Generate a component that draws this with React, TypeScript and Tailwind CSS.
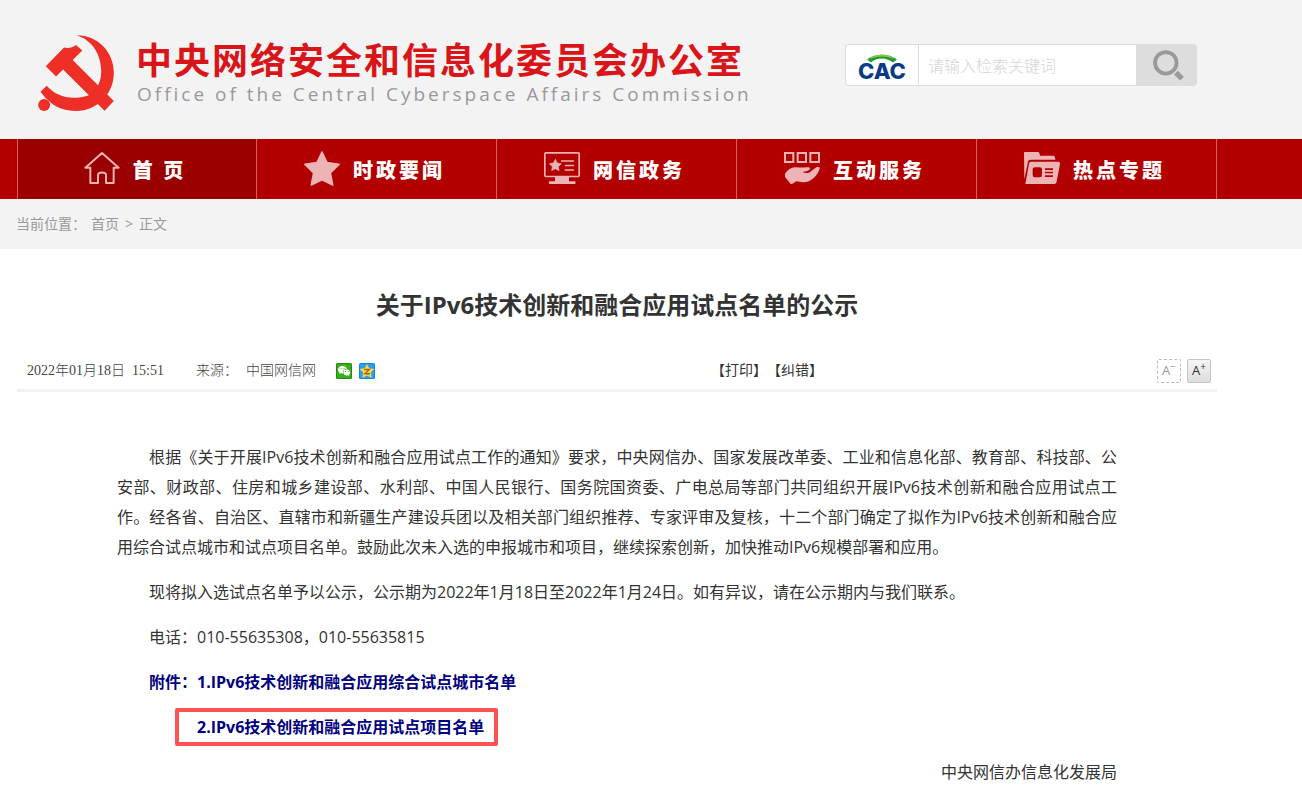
import type { ReactNode } from 'react';

function Emblem() {
  return (
    <svg viewBox="54 44 228 229" className="h-[76px] w-[76px] shrink-0" fill="#ee2f28" aria-hidden="true">
      <path d="M170 45C236 46 282 96 282 158C282 222 232 273 168 273C134 273 108 263 91 247L76 234L61 215L80 197C108 230 155 242 205 226L235 195C242 180 244 168 244 152C243 108 222 62 170 45Z" />
      <path d="M77 138L132 82C145 85 158 82 168 74L187 91L158 119L282 243L254 272L129 148L108 169Z" />
      <circle cx="72" cy="255" r="18" />
    </svg>
  );
}

function SearchLogo() {
  return (
    <svg viewBox="0 -9 54 40" className="h-10 w-[54px]" aria-label="CAC" role="img">
      <text x="27" y="25" textAnchor="middle" fill="#0a3b87" fontFamily="Inter" fontWeight="800" fontSize="22">CAC</text>
      <path d="M12 5.500C20 -1 34 -1 42 5.500L38 8.500C31 3 22 3 16 8.500Z" fill="#1f9a3c" />
      <path d="M14 4C22 -0.700 32 -0.700 40 4L38 4.500C31 1.800 22 1.800 16 4.500Z" fill="#8cc63f" />
    </svg>
  );
}

function SearchIcon() {
  return (
    <svg viewBox="968 62 92 92" className="h-[31px] w-[31px]" fill="none" stroke="#999999" aria-hidden="true">
      <circle cx="1006" cy="100" r="32" strokeWidth="11" />
      <path d="M1036 129L1054 147" strokeWidth="16" />
    </svg>
  );
}

function NavIcon({ children }: { children: ReactNode }) {
  return (
    <svg viewBox="0 0 108 108" className="h-9 w-9 shrink-0" fill="#eeb3b5" stroke="none" aria-hidden="true">
      {children}
    </svg>
  );
}

const homeIcon = (
  <NavIcon>
    <path d="M54 6L104 50H89V96H66V72C66 62 42 62 42 72V96H19V50H4Z" fill="none" stroke="#eeb3b5" strokeWidth="6" strokeLinejoin="round" />
  </NavIcon>
);

const starIcon = (
  <NavIcon>
    <path d="M54 3L69 35L105 40L79 66L86 102L54 86L22 102L29 66L3 40L39 35Z" stroke="#eeb3b5" strokeWidth="5" strokeLinejoin="round" />
  </NavIcon>
);

const monitorIcon = (
  <NavIcon>
    <rect x="2.5" y="5.5" width="103" height="71" rx="3" fill="none" stroke="#eeb3b5" strokeWidth="5" />
    <path d="M33 77H75V91H91A4 4 0 0 1 91 99H18A4 4 0 0 1 18 91H33Z" />
    <path d="M34 25L39.500 36L52 38L43 47L45 59L34 53L23 59L25 47L16 38L28.500 36Z" stroke="#eeb3b5" strokeWidth="2" strokeLinejoin="round" />
    <path d="M53 30H88M64 43.500H88M64 57H88" fill="none" stroke="#eeb3b5" strokeWidth="5" strokeLinecap="round" />
  </NavIcon>
);

const handIcon = (
  <NavIcon>
    <path d="M3 6H28V33H3ZM41 6H66V33H41ZM79 6H105V33H79Z" fill="none" stroke="#eeb3b5" strokeWidth="6" />
    <path d="M3 68C12 54 24 47 38 49C50 51 62 48 75 49C83 54 75 61 56 63C64 68 76 67 82 60L97 49C101 47 106 48 108 50C102 73 80 95 56 94L37 91L24 99L20 99L3 78Z" />
  </NavIcon>
);

const folderIcon = (
  <NavIcon>
    <path d="M0 5Q0 3 2 3H42Q46 3 47 9L48 14H88Q94 15 94 26H20Q13 26 12 32L1 85Z" />
    <path fillRule="evenodd" d="M21 32H103Q109 33 108 39L98 92Q96 99 91 99H4L15 38Q16 32 21 32ZM32 49Q26 49 26 55V72Q26 79 32 79H47Q54 79 54 72V55Q54 49 47 49ZM63 52V57H87V52ZM63 62V67H87V62ZM63 73V78H87V73Z" />
  </NavIcon>
);

const navItems = [
  { label: '首 页', icon: homeIcon, active: true },
  { label: '时政要闻', icon: starIcon, active: false },
  { label: '网信政务', icon: monitorIcon, active: false },
  { label: '互动服务', icon: handIcon, active: false },
  { label: '热点专题', icon: folderIcon, active: false },
];

function WechatIcon() {
  return (
    <svg viewBox="0 0 16 16" className="h-4 w-4" aria-hidden="true">
      <rect width="16" height="16" rx="1.500" fill="#1c8a0c" />
      <rect x="1" y="1" width="14" height="14" rx="1" fill="#3aae1a" />
      <path d="M6.500 3C3.800 3 2 4.700 2 6.700C2 8 2.700 9 3.700 9.700L3.500 11L5 10.300L7 10.400C6.500 7.500 8.500 6 10.800 6C10.300 4.200 8.700 3 6.500 3Z" fill="#fff" />
      <path d="M10.800 6.500C8.800 6.500 7.300 7.800 7.300 9.500S8.800 12.500 10.800 12.500L12 12.300L13.300 13L13 11.800C13.800 11.200 14.200 10.400 14.200 9.500C14.200 7.800 12.800 6.500 10.800 6.500Z" fill="#fff" />
      <path d="M4.500 5H5.500V6H4.500ZM7.500 5H8.500V6H7.500ZM9 8H10V9H9ZM11.700 8H12.700V9H11.700Z" fill="#3db71d" />
    </svg>
  );
}

function QzoneIcon() {
  return (
    <svg viewBox="0 0 16 16" className="h-4 w-4" aria-hidden="true">
      <rect width="16" height="16" rx="1.500" fill="#1583dc" />
      <rect x="1" y="1" width="14" height="14" rx="1" fill="#2ba0f0" />
      <path d="M8 1L10.200 5.300L15.300 6L11.700 9.500L12.700 15L8 12.500L3.300 15L4.300 9.500L0.700 6L5.800 5.300Z" fill="#ffd83d" />
      <path d="M5.200 6.500H10.300L6 10.700H11" fill="none" stroke="#a5641a" strokeWidth="1.400" />
    </svg>
  );
}

export default function App() {
  return (
    <div className="min-h-screen bg-white font-['Open_Sans','Noto_Sans_CJK_SC',sans-serif] text-[#333333]">
      <header className="bg-[#f3f3f3]">
        <div className="flex h-[139px] max-w-[1234px] items-start justify-between pr-[37px] pl-[38px]">
          <div className="flex pt-[35px]">
            <Emblem />
            <div className="ml-[22px] whitespace-nowrap">
              <h1 className="font-['Noto_Sans_CJK_SC',sans-serif] text-[36px] leading-[46px] font-bold tracking-[2px] text-[#d91519]">中央网络安全和信息化委员会办公室</h1>
              <p className="pl-px text-[19px] leading-[26px] tracking-[3px] text-[#999999]">Office of the Central Cyberspace Affairs Commission</p>
            </div>
          </div>
          <form className="mt-11 flex h-[42px] w-[352px] overflow-hidden rounded-[3px] border border-[#dddddd] bg-white" onSubmit={(e) => e.preventDefault()}>
            <div className="flex w-[73px] shrink-0 items-center justify-center border-r border-[#dddddd]">
              <SearchLogo />
            </div>
            <input aria-label="请输入检索关键词" placeholder="请输入检索关键词" className="min-w-0 flex-1 px-[9px] pt-[2px] text-[16px] font-light outline-none placeholder:text-[#d5d5d5]" />
            <button type="submit" aria-label="搜索" className="flex w-[60px] items-center justify-center bg-[#dddddd] pl-1">
              <SearchIcon />
            </button>
          </form>
        </div>
      </header>

      <nav className="bg-[#b20000] px-[17px]">
        <ul className="grid h-[60px] max-w-[1200px] grid-cols-5">
          {navItems.map((item) => (
            <li key={item.label} className="border-r border-[#d35f5f] first:border-l">
              <a
                href="#"
                className={
                  item.active
                    ? "flex h-full items-center justify-center gap-[13px] bg-[#9b0000] pr-1 font-['Noto_Sans_CJK_SC',sans-serif] text-[20px] font-black whitespace-pre text-white"
                    : "flex h-full items-center justify-center gap-[13px] pr-1 font-['Noto_Sans_CJK_SC',sans-serif] text-[20px] font-black whitespace-pre text-white"
                }
              >
                {item.icon}
                <span className="pt-[2px] tracking-[3px]">{item.label}</span>
              </a>
            </li>
          ))}
        </ul>
      </nav>

      <div className="bg-[#f3f3f3] px-4">
        <div className="flex h-[50px] items-center pb-[2px] text-[14px] text-[#999999]">
          <span>当前位置：</span>
          <a href="#" className="ml-[5px]">首页</a>
          <span className="mx-[6px]">&gt;</span>
          <a href="#">正文</a>
        </div>
      </div>

      <main className="px-[17px]">
        <article className="max-w-[1200px]">
          <h2 className="pt-9 text-center text-[24px] leading-10 font-bold">关于IPv6技术创新和融合应用试点名单的公示</h2>
          <div className="mt-6 grid h-[43px] grid-cols-[1fr_auto_388px] items-center border-b-[3px] border-[#f2f2f2] pt-[3px] pr-[6px] pl-[10px] font-['Liberation_Serif','Noto_Sans_CJK_SC',serif] text-[14px] whitespace-nowrap text-[#444444]">
            <div className="flex items-center font-light">
              <time>2022年01月18日&nbsp; 15:51</time>
              <span className="ml-8">来源：</span>
              <span className="ml-2">中国网信网</span>
              <a href="#" aria-label="分享到微信" className="ml-5"><WechatIcon /></a>
              <a href="#" aria-label="分享到QQ空间" className="ml-[7px]"><QzoneIcon /></a>
            </div>
            <div className="flex text-[#333333]">
              <button type="button">【打印】</button>
              <button type="button">【纠错】</button>
            </div>
            <div className="flex justify-end gap-[6px] font-['Open_Sans',sans-serif]">
              <button type="button" aria-label="缩小字体" className="flex h-6 w-6 items-center justify-center rounded-[2px] border border-dashed border-[#bbbbbb] text-[13px] text-[#999999]">
                A<sup className="text-[10px]">−</sup>
              </button>
              <button type="button" aria-label="放大字体" className="flex h-6 w-6 items-center justify-center rounded-[2px] border border-[#c4c4c4] bg-linear-to-b from-[#f6f6f6] to-[#dddddd] text-[13px] text-[#333333]">
                A<sup className="text-[10px]">+</sup>
              </button>
            </div>
          </div>

          <div className="mx-[100px] mt-[50px] space-y-[15px] pb-3 text-justify text-[16px] leading-[30px]">
            <p className="indent-8">根据《关于开展IPv6技术创新和融合应用试点工作的通知》要求，中央网信办、国家发展改革委、工业和信息化部、教育部、科技部、公安部、财政部、住房和城乡建设部、水利部、中国人民银行、国务院国资委、广电总局等部门共同组织开展IPv6技术创新和融合应用试点工作。经各省、自治区、直辖市和新疆生产建设兵团以及相关部门组织推荐、专家评审及复核，十二个部门确定了拟作为IPv6技术创新和融合应用综合试点城市和试点项目名单。鼓励此次未入选的申报城市和项目，继续探索创新，加快推动IPv6规模部署和应用。</p>
            <p className="indent-8">现将拟入选试点名单予以公示，公示期为2022年1月18日至2022年1月24日。如有异议，请在公示期内与我们联系。</p>
            <p className="indent-8">电话：010-55635308，010-55635815</p>
            <p className="pl-8 font-bold text-[#000080]">附件：<a href="#">1.IPv6技术创新和融合应用综合试点城市名单</a></p>
            <p className="pl-20 font-bold text-[#000080]">
              <a href="#" className="relative inline-block">
                2.IPv6技术创新和融合应用试点项目名单
                <span className="absolute -top-1 right-[-14px] -bottom-1 left-[-22px] rounded-[2px] border-4 border-[#ff5252]" />
              </a>
            </p>
            <p className="text-right">中央网信办信息化发展局</p>
          </div>
        </article>
      </main>
    </div>
  );
}
